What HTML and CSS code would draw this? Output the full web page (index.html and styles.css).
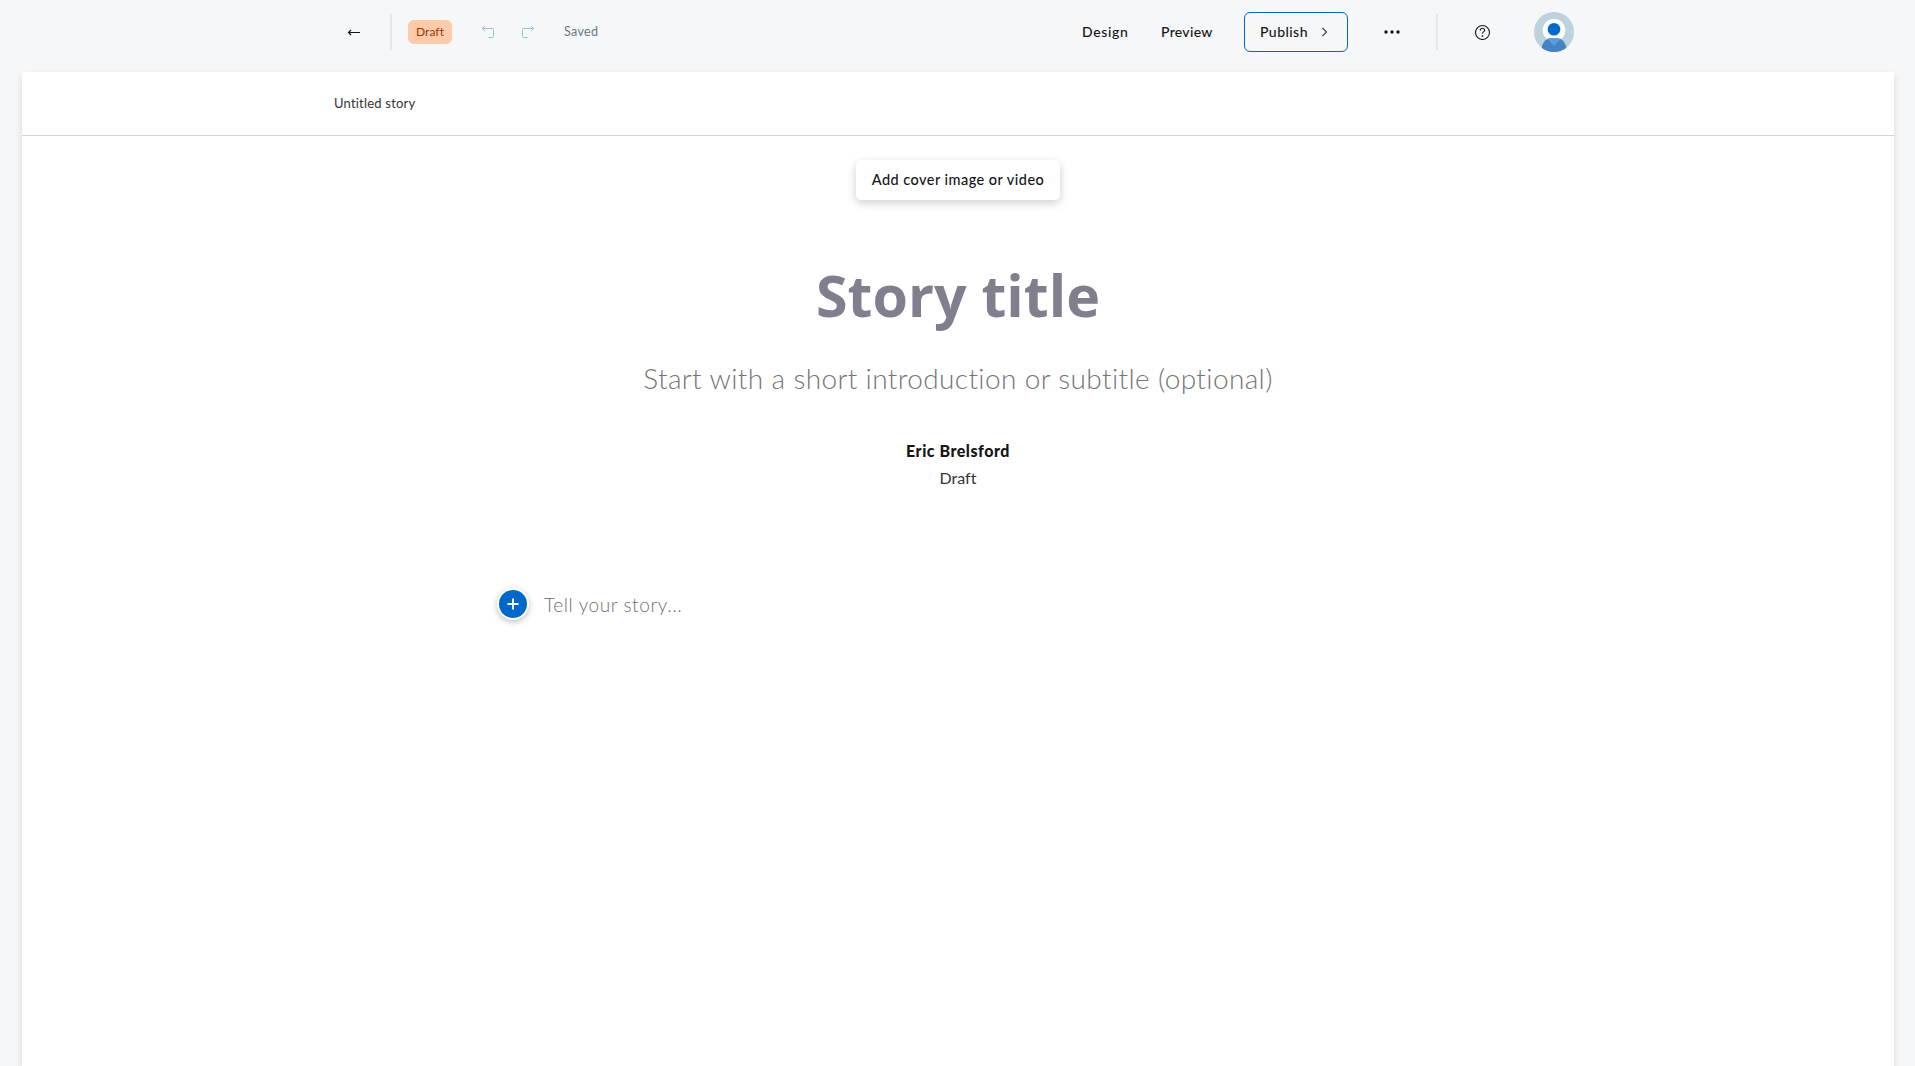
FILE: index.html
```html
<!DOCTYPE html>
<html lang="en">
<head>
<meta charset="utf-8">
<title>Untitled story</title>
<link rel="stylesheet" href="styles.css">
</head>
<body>
<header class="toolbar">
  <div class="tools">
    <button class="icon-button back" aria-label="Back">
      <svg width="14" height="10" viewBox="0 0 14 10" fill="none" stroke="#151515" stroke-width="1.2"><path d="M13 5.500H1.500M4 3 1.500 5.500 4 8"/></svg>
    </button>
    <span class="divider"></span>
    <span class="badge">Draft</span>
    <button class="icon-button undo" aria-label="Undo">
      <svg width="14" height="14" viewBox="0 0 14 14" fill="none" stroke="#9fbdcc"><path d="M4 1 1.3 3.5 4 6M1.5 3.5h10a1 1 0 0 1 1 1v7a1 1 0 0 1-1 1h-4"/></svg>
    </button>
    <button class="icon-button redo" aria-label="Redo">
      <svg width="14" height="14" viewBox="0 0 14 14" fill="none" stroke="#9fbdcc"><path d="m10 1 2.7 2.5L10 6M12.5 3.5h-10a1 1 0 0 0-1 1v7a1 1 0 0 0 1 1h4"/></svg>
    </button>
    <span class="saved">Saved</span>
  </div>
  <nav class="actions">
    <button class="link design">Design</button>
    <button class="link preview">Preview</button>
    <button class="publish"><span>Publish</span>
      <svg width="7" height="10" viewBox="0 0 7 10" fill="none" stroke="#444" stroke-width="1.2"><path d="m1.5 1 4 4-4 4"/></svg>
    </button>
    <button class="icon-button more" aria-label="More">
      <svg width="16" height="4" viewBox="0 0 16 4" fill="#151515"><circle cx="2" cy="2" r="1.7"/><circle cx="8" cy="2" r="1.7"/><circle cx="14" cy="2" r="1.7"/></svg>
    </button>
    <span class="divider"></span>
    <button class="icon-button help" aria-label="Help">
      <svg width="16" height="16" viewBox="0 0 16 16" fill="none" stroke="#1c1c1c" stroke-width="1.1"><circle cx="7.500" cy="8.500" r="7"/><path d="M5.300 6.700v-.5a2.200 2 0 0 1 4.400 0c0 1.600-2.200 1.400-2.200 3.500"/><path d="M6.700 12h1.600" stroke-width="1.5"/></svg>
    </button>
    <svg class="avatar" width="40" height="40" viewBox="0 0 40 40"><defs><clipPath id="disc"><circle cx="20" cy="20" r="20"/></clipPath></defs><g clip-path="url(#disc)"><path fill="#bcd3de" d="M0 0h40v40H0z"/><circle cx="20" cy="18.3" r="11.3" fill="#fff"/><path fill="#4583c2" d="M7.500 40v-4Q10 26 17 26h6q7 0 9.500 10v4z"/><path fill="#5a9ddd" d="m14 27.500 6 6.500 6-6.500-3-1.500h-6z"/><circle cx="20" cy="17.300" r="6.300" fill="#006ac8"/></g></svg>
  </nav>
</header>
<main class="story">
  <div class="story-bar"><span>Untitled story</span></div>
  <section class="cover">
    <button class="add-cover"><span>Add cover image or video</span></button>
    <h1>Story title</h1>
    <p class="subtitle">Start with a short introduction or subtitle (optional)</p>
    <p class="author">Eric Brelsford</p>
    <p class="status">Draft</p>
  </section>
  <section class="body-row">
    <button class="add-block" aria-label="Add block">
      <svg width="12" height="12" viewBox="0 0 12 12" stroke="#fff" stroke-width="1.8"><path d="M6 .5v11M.5 6h11"/></svg>
    </button>
    <p class="prompt">Tell your story...</p>
  </section>
</main>
</body>
</html>
```
FILE: styles.css
```css
* { box-sizing: border-box; }
body { margin: 0; height: 1066px; overflow: hidden; display: flex; flex-direction: column; background: #f5f7f9; color: #151515; font-family: Lato, "Noto Sans", sans-serif; font-variant-ligatures: none; }
h1, p { margin: 0; white-space: nowrap; }
button { font: inherit; color: inherit; border: 0; padding: 0; background: none; white-space: nowrap; }
svg { display: block; flex: none; }
.toolbar { height: 72px; flex: none; padding: 12px 341px 20px 334px; display: flex; justify-content: space-between; }
.tools, .actions { display: flex; align-items: center; height: 40px; }
.icon-button { width: 40px; height: 40px; display: flex; align-items: center; justify-content: center; }
.divider { width: 2px; height: 36px; background: #e1eaea; }
.tools .divider { margin: 0 16px; }
.badge { width: 44px; height: 24px; border-radius: 6px; background: #ffcaa9; color: #8f3c07; font-size: 12px; line-height: 24px; text-align: center; letter-spacing: .1px; }
.undo { margin-left: 16px; }
.saved { margin-left: 16px; padding-bottom: 1px; font-size: 12.500px; letter-spacing: .35px; color: #6a7780; }
.link { font-size: 14px; font-weight: 500; text-align: left; letter-spacing: .65px; padding-bottom: 2px; }
.design { width: 79px; }
.preview { width: 83px; letter-spacing: .3px; }
.publish { width: 104px; height: 40px; border: 1px solid #0068c8; border-radius: 6px; display: flex; align-items: center; padding-left: 15px; font-size: 14px; font-weight: 500; letter-spacing: .45px; }
.publish span { width: 61px; text-align: left; padding-bottom: 2px; }
.more { margin-left: 24px; }
.actions .divider { margin-left: 24px; }
.help { margin-left: 25px; }
.avatar { margin-left: 31px; }
.story { flex: 1; margin: 0 21px 0 22px; background: #fff; box-shadow: 0 4px 8px rgba(0,0,0,.12); }
.story-bar { height: 64px; border-bottom: 1px solid #c8d7e0; padding: 0 0 1px 312px; display: flex; align-items: center; font-size: 13px; letter-spacing: .2px; color: #333; }
.cover { display: flex; flex-direction: column; align-items: center; padding-top: 24px; }
.add-cover { width: 204px; height: 40px; padding-bottom: 1px; border-radius: 5px; background: #fff; box-shadow: 0 3px 10px rgba(0,0,0,.2); font-size: 14.500px; font-weight: 500; letter-spacing: .46px; }
h1 { margin-top: 55px; height: 80px; font: 700 57.300px/80px "Open Sans", sans-serif; color: #817f8e; }
.subtitle { margin-top: 23px; font-size: 28px; line-height: 40px; font-weight: 300; letter-spacing: .37px; color: #757575; }
.author { margin-top: 39px; font-size: 16px; line-height: 27px; font-weight: 900; letter-spacing: .52px; }
.status { font-size: 16px; line-height: 27px; color: #333; }
.body-row { display: flex; align-items: center; padding: 92px 0 0 477px; height: 134px; }
.add-block { width: 28px; height: 28px; border-radius: 50%; background: #0068c8; box-shadow: 0 0 0 2px #fff, 0 2px 6px 2px rgba(0,0,0,.25); display: flex; align-items: center; justify-content: center; }
.prompt { margin-left: 17px; font-size: 19px; font-weight: 300; letter-spacing: .6px; color: #707070; }
```
